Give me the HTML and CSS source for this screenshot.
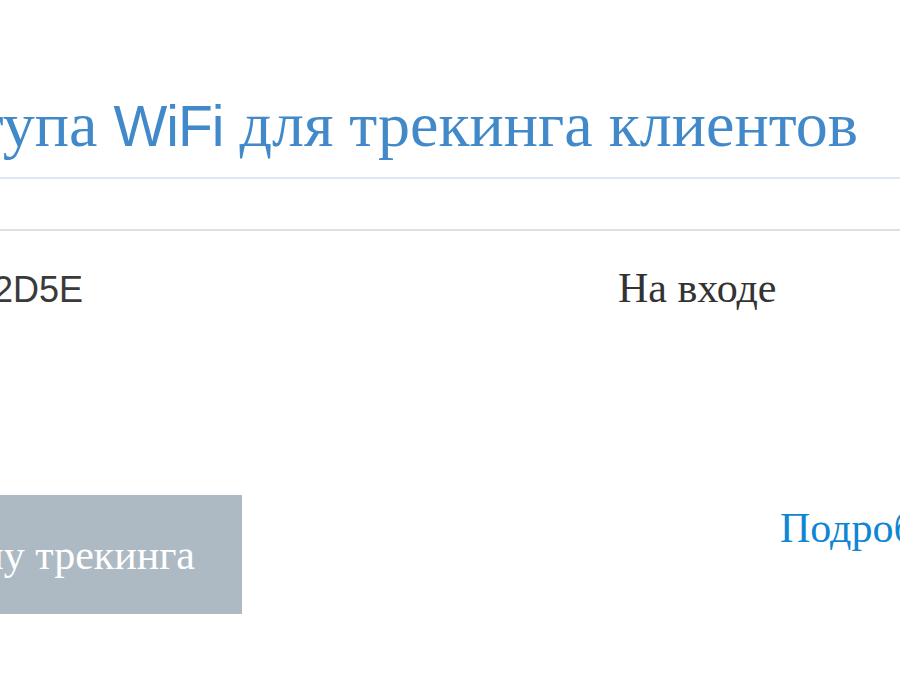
FILE: index.html
```html
<!DOCTYPE html>
<html>
    <head>
        <meta charset="utf-8">
        <title>Точки доступа WiFi</title>
        <link rel="stylesheet" href="styles.css">
    </head>
    <body>
        <div class="page">
            <h1 class="title"><span>Точки доступа <span class="lat">WiFi</span> для трекинга клиентов</span></h1>
            <div class="thead"></div>
            <div class="row">
                <div class="cell mac"><span class="lat">4C5E0CA12D5E</span></div>
                <div class="cell place">На входе</div>
            </div>
            <div class="actions">
                <div class="btn_wrap"><button class="btn" type="button">Создать группу трекинга</button></div>
                <a class="more" href="#">Подробнее</a>
            </div>
        </div>
    </body>
</html>
```

FILE: styles.css
```css
*{margin:0;padding:0;}
html,body{height:100%;overflow:hidden;background:#fff;}
body{font-family:"Liberation Serif","Times New Roman",serif;color:#333;}
.lat{font-family:"Liberation Sans",Arial,sans-serif;}
.page{width:900px;}

/* заголовок, левый край уходит за окно */
.title{display:flex;justify-content:flex-end;white-space:nowrap;padding:0 42px 21px 0;margin-top:95px;
    font-size:64px;line-height:60px;font-weight:normal;color:#4189c8;border-bottom:2px solid #dce7f2;}
.title .lat{font-size:57px;letter-spacing:-1px;}

.thead{height:50px;border-bottom:2px solid #e0e0e0;}

.row{display:grid;grid-template-columns:83px 1fr;column-gap:535px;align-items:baseline;padding-top:33px;}
.cell{line-height:48px;white-space:nowrap;}
.mac{display:flex;justify-content:flex-end;font-size:36px;color:#3a3a3a;}
.place{font-size:42px;color:#333;}

.actions{display:flex;align-items:flex-start;margin-top:181px;}
.btn_wrap{width:242px;display:flex;justify-content:flex-end;flex-shrink:0;}
.btn{flex-shrink:0;white-space:nowrap;border:0;padding:36px 47px 35px 40px;background:#adbac4;color:#fff;
    font-family:inherit;font-size:42px;line-height:48px;}
.more{flex-shrink:0;white-space:nowrap;margin:9px 0 0 538px;font-size:42px;line-height:48px;color:#0f86d2;text-decoration:none;}
```
